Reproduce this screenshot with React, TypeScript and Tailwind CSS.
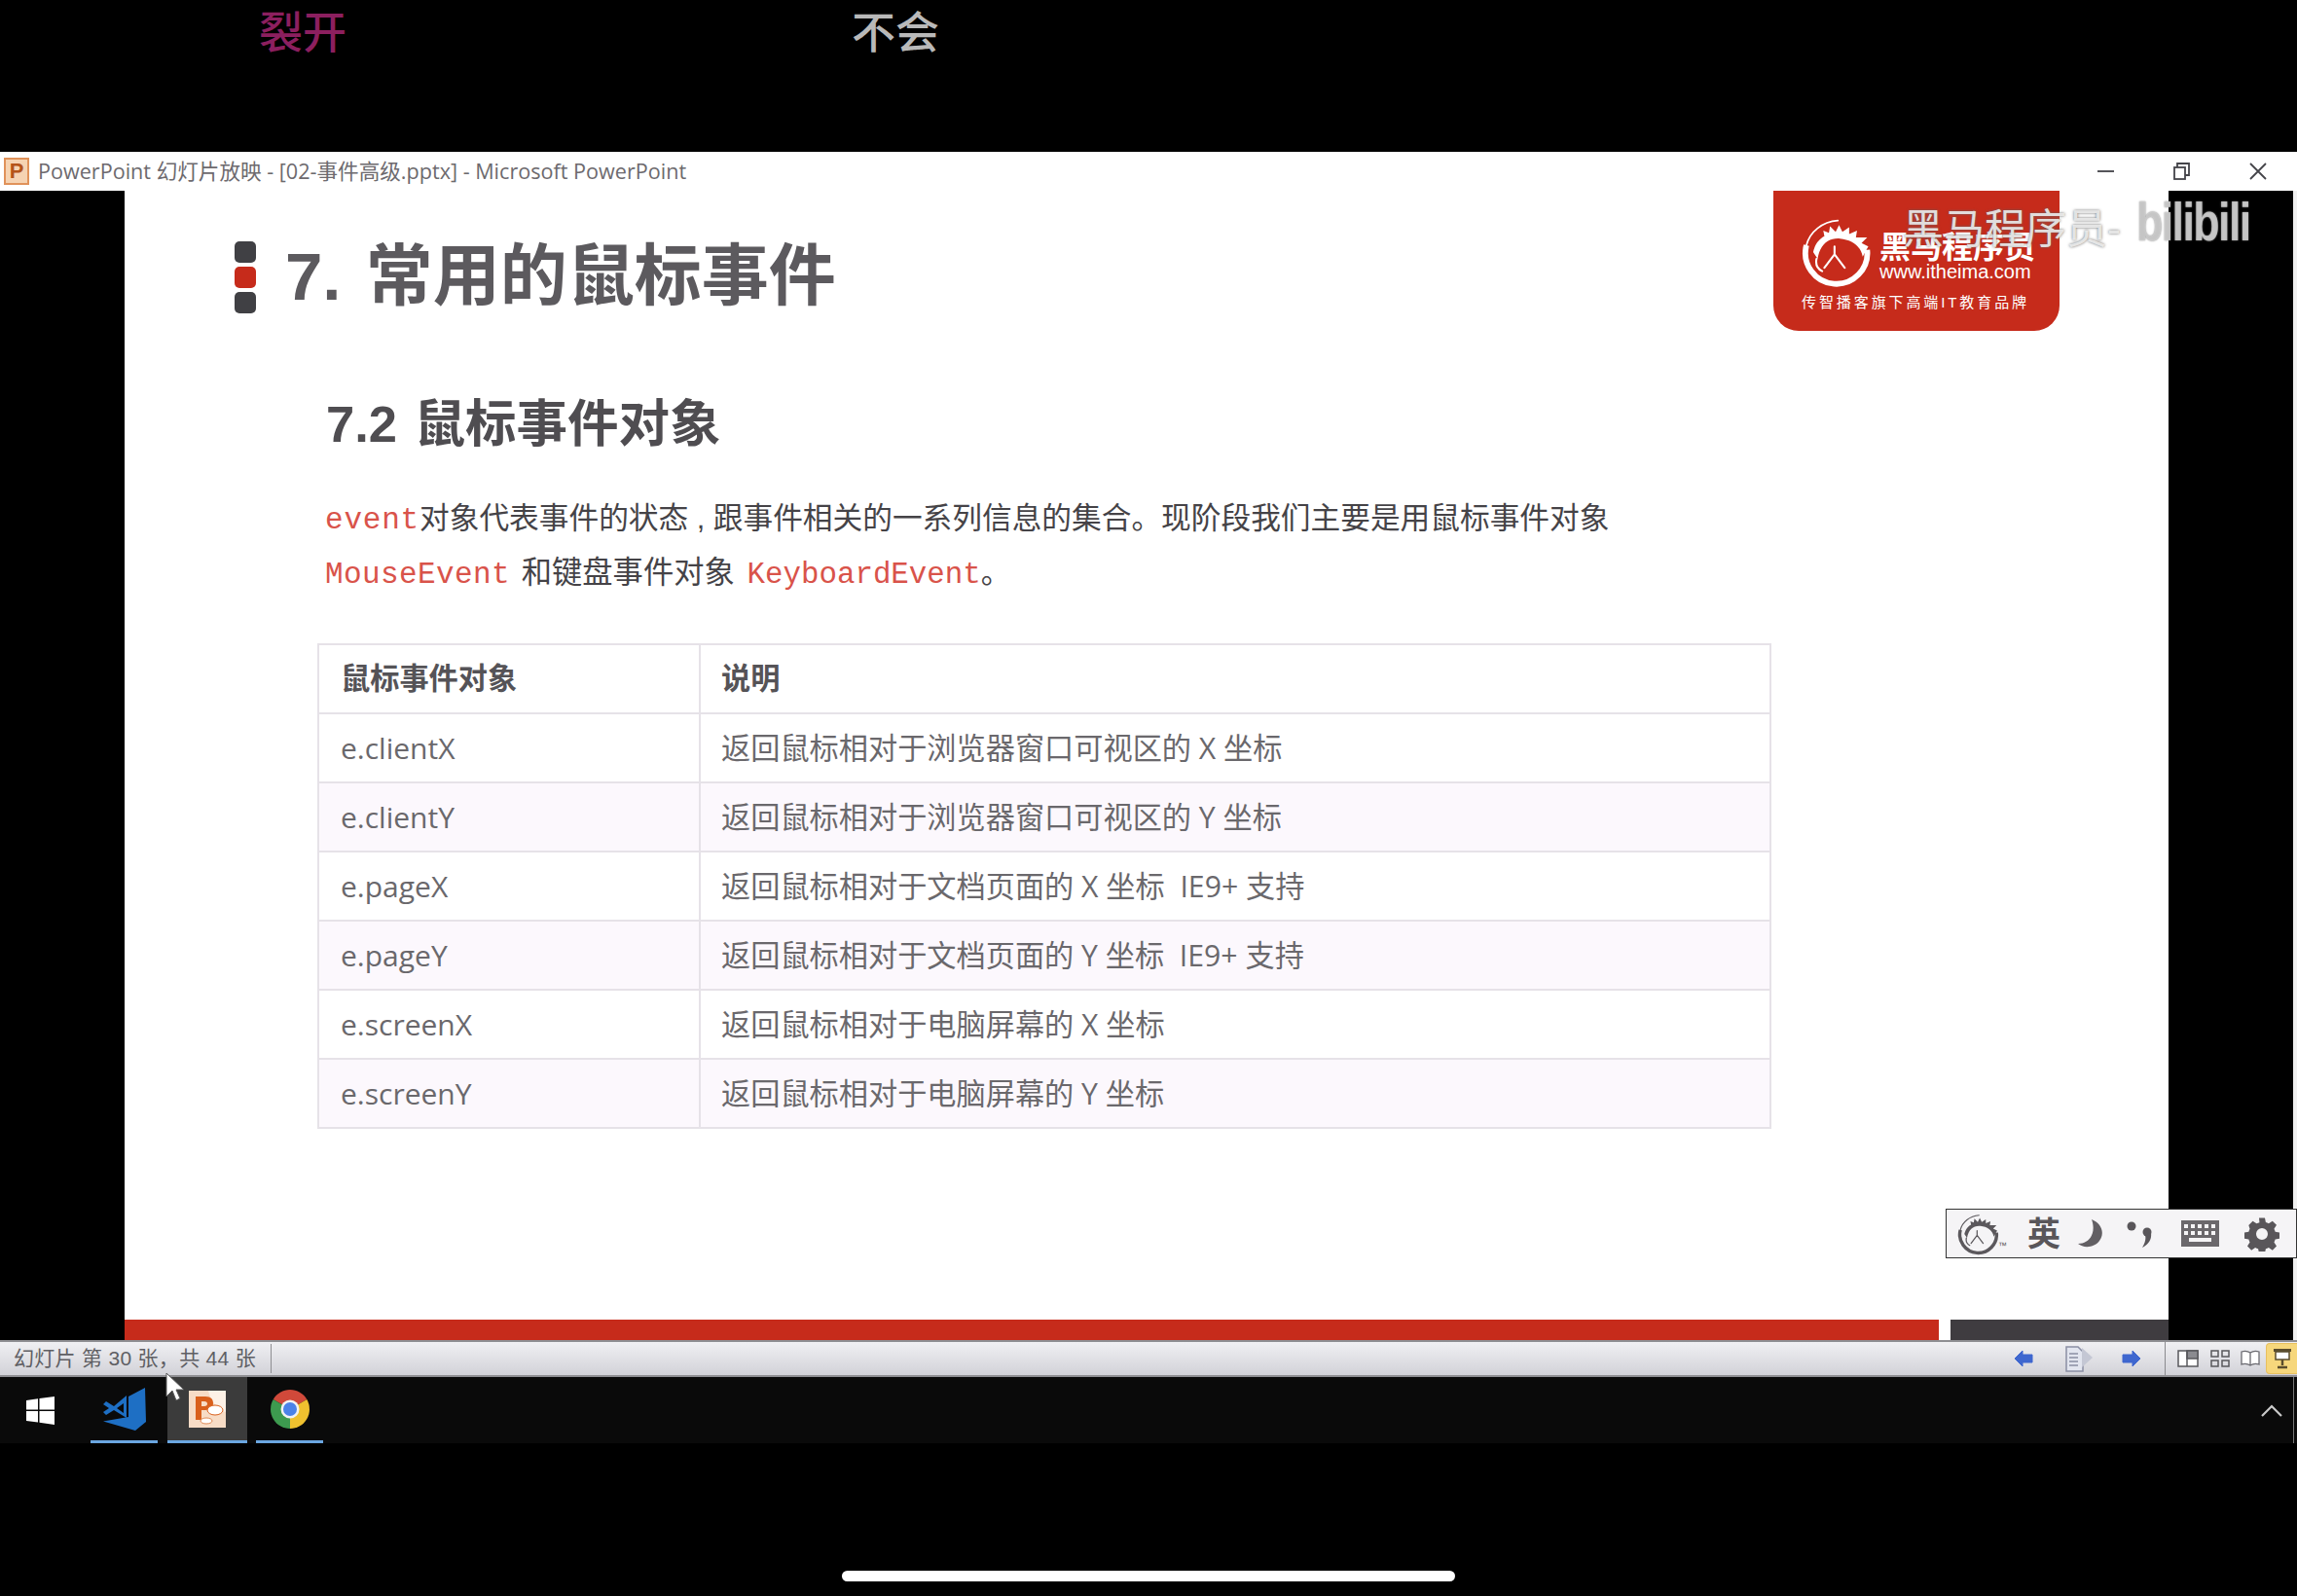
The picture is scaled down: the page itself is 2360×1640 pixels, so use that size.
import React from 'react';

const cjk = '"Liberation Sans", "Noto Sans CJK SC", sans-serif';
const mono = '"Liberation Mono", monospace';

const rows = [
  ['e.clientX', '返回鼠标相对于浏览器窗口可视区的 X 坐标'],
  ['e.clientY', '返回鼠标相对于浏览器窗口可视区的 Y 坐标'],
  ['e.pageX', '返回鼠标相对于文档页面的 X 坐标  IE9+ 支持'],
  ['e.pageY', '返回鼠标相对于文档页面的 Y 坐标  IE9+ 支持'],
  ['e.screenX', '返回鼠标相对于电脑屏幕的 X 坐标'],
  ['e.screenY', '返回鼠标相对于电脑屏幕的 Y 坐标'],
];

function HorseMark({ size, color }: { size: number; color: string }) {
  return (
    <svg width={size} height={size} viewBox="0 0 64 64" fill="none">
      <path d="M60 30A27.500 27.500 0 1 1 6 26" stroke={color} strokeWidth="5" />
      <path d="M6 26C9 14 20 5 34 4" stroke={color} strokeWidth="1.500" strokeLinecap="round" />
      <path d="M12 32C14 24 18 20 22 18L21 13 26 15 27 9 32 14 35 8 38 14 44 10 44 16 51 13 50 19 60 19 55 24 61 27 56 36C54 26 46 21 36 20 26 19 18 25 16 38Z" fill={color} />
      <path d="M31 27V34L22 46M31 34 40 46M15 38C14 43 16 47 20 49" stroke={color} strokeWidth="1.800" strokeLinecap="round" />
    </svg>
  );
}

function Logo() {
  return (
    <div className="absolute left-[1694px] top-0 flex h-[144px] w-[294px] flex-col items-center rounded-b-[26px] bg-[#c62b1b] pt-[26px] text-white">
      <div className="flex items-center gap-[8px] self-start pl-[27px]">
        <HorseMark size={74} color="#ffffff" />
        <div className="flex flex-col items-start pt-[15px]">
          <span className="text-[32px] leading-[25px] font-bold">黑马程序员</span>
          <span className="text-[20px] leading-[24px]">www.itheima.com</span>
        </div>
      </div>
      <span className="mt-[5px] ml-[-2px] text-[15px] leading-[20px] tracking-[2.900px]">传智播客旗下高端IT教育品牌</span>
    </div>
  );
}

function ImeBar() {
  return (
    <div className="absolute right-[-132px] top-[1046px] flex h-[51px] w-[361px] items-center border border-[#333333] bg-[#f5f4f6] pl-[10px] text-[#59565a]">
      <HorseMark size={44} color="#5b585c" />
      <span className="ml-[-1px] mt-[26px] text-[9px] leading-none">™</span>
      <span className="ml-[21px] text-[34px] leading-none font-bold">英</span>
      <svg className="ml-[18px]" width="27" height="29" viewBox="0 0 27 29"><path d="M14 0C24 4 28 14 22 22 17 29 6 30 0 25 12 25 19 14 14 0Z" fill="#625f63" /></svg>
      <svg className="ml-[23px]" width="28" height="30" viewBox="0 0 28 30" fill="#59565a"><circle cx="5" cy="7" r="4.500" /><circle cx="21" cy="13" r="4.500" /><path d="M25 14C26 21 22 26 16 29 19 24 20 20 19 16Z" /></svg>
      <svg className="ml-[28px]" width="39" height="27" viewBox="0 0 39 27"><rect width="39" height="27" fill="#6b686c" /><g fill="#f5f4f6"><rect x="3" y="4" width="4" height="4" /><rect x="10" y="4" width="4" height="4" /><rect x="17" y="4" width="4" height="4" /><rect x="24" y="4" width="4" height="4" /><rect x="31" y="4" width="4" height="4" /><rect x="3" y="11" width="4" height="4" /><rect x="10" y="11" width="4" height="4" /><rect x="17" y="11" width="4" height="4" /><rect x="24" y="11" width="4" height="4" /><rect x="31" y="11" width="4" height="4" /><rect x="8" y="18" width="23" height="4" /></g></svg>
      <svg className="ml-[26px]" width="36" height="36" viewBox="0 0 24 24" fill="#59565a"><path fillRule="evenodd" d="M10 1h4l.6 3a8 8 0 0 1 2 .8l2.600-1.700 2.800 2.800-1.700 2.600a8 8 0 0 1 .8 2l3 .6v4l-3 .6a8 8 0 0 1-.8 2l1.700 2.600-2.800 2.800-2.600-1.700a8 8 0 0 1-2 .8l-.6 3h-4l-.6-3a8 8 0 0 1-2-.8l-2.600 1.700-2.800-2.800 1.700-2.600a8 8 0 0 1-.8-2l-3-.6v-4l3-.6a8 8 0 0 1 .8-2L2.900 6l2.800-2.800 2.600 1.700a8 8 0 0 1 2-.8ZM12 8a4 4 0 1 0 0 8 4 4 0 0 0 0-8Z" /></svg>
    </div>
  );
}

function StatusRight() {
  return (
    <div className="flex h-full items-center">
      <svg width="20" height="18" viewBox="0 0 20 18"><path d="M9 1 1 9l8 8v-4h10V5H9Z" fill="#3f67cf" stroke="#3f67cf" strokeLinejoin="round" /></svg>
      <svg className="ml-[32px]" width="30" height="27" viewBox="0 0 30 27" fill="none"><path d="M2 1h12l5 5v20H2Z" fill="#e2e5ef" stroke="#8a8fa4" strokeWidth="1.500" /><path d="M5 8h9M5 12h9M5 16h9M5 20h9" stroke="#8a8fa4" strokeWidth="1.500" /><path d="M18 2l11 10-11 10Z" fill="#c4c7d4" /></svg>
      <svg className="ml-[29px]" width="20" height="18" viewBox="0 0 20 18"><path d="M11 1l8 8-8 8v-4H1V5h10Z" fill="#3f67cf" stroke="#3f67cf" strokeLinejoin="round" /></svg>
      <div className="ml-[24px] h-[34px] w-[1px] bg-[#8a8a8e]" />
      <svg className="ml-[12px]" width="22" height="18" viewBox="0 0 22 18" fill="none" stroke="#58585c" strokeWidth="1.500"><rect x="1" y="1" width="20" height="16" fill="#fff" /><rect x="10" y="1" width="11" height="8" fill="#8b8b90" /><path d="M10 1v16" /></svg>
      <svg className="ml-[12px]" width="20" height="18" viewBox="0 0 20 18" fill="none" stroke="#58585c" strokeWidth="1.500"><rect x="1" y="1" width="7" height="6" /><rect x="12" y="1" width="7" height="6" /><rect x="1" y="11" width="7" height="6" /><rect x="12" y="11" width="7" height="6" /></svg>
      <svg className="ml-[11px]" width="20" height="18" viewBox="0 0 20 18" fill="#fff" stroke="#6a6a70" strokeWidth="1.300"><path d="M10 3C7 1 4 1 1 2v13c3-1 6-1 9 1 3-2 6-2 9-1V2c-3-1-6-1-9 1Zm0 0v13" /></svg>
      <div className="ml-[6px] flex h-[32px] w-[32px] items-center justify-center rounded-l-[4px] border border-r-0 border-[#e8c060] bg-[#f6d77c]">
        <svg width="20" height="22" viewBox="0 0 20 22" fill="none"><rect x="1" y="1" width="18" height="3" fill="#5a4c2c" /><rect x="3" y="4" width="14" height="8" fill="#fff" stroke="#5a4c2c" strokeWidth="1.500" /><path d="M10 12v6M5 20h10" stroke="#5a4c2c" strokeWidth="2.500" /></svg>
      </div>
    </div>
  );
}

function Taskbar() {
  return (
    <div className="relative flex h-[68px] items-stretch bg-[#0a0a0a]">
      <div className="flex w-[93px] items-center pl-[27px]">
        <svg width="29" height="29" viewBox="0 0 29 29" fill="#ffffff"><path d="M0 4l12-1.800V13.500H0ZM13.500 2 29 0v13.500H13.500ZM0 15h12v11.500L0 25ZM13.500 15H29v14l-15.500-2.200Z" /></svg>
      </div>
      <div className="flex w-[69px] items-center justify-center border-b-[3px] border-[#6aa6e0]">
        <svg width="44" height="44" viewBox="0 0 44 44" fill="#1e6fc4"><path d="M26 9 43 0 44 35 33 44 0 34.500 26 30Z" /><path fillRule="evenodd" d="M3 14 11 19 24 8V31L11 23 3 28 0 25 6 21 0 17ZM14 21 21 26V16Z" /></svg>
      </div>
      <div className="ml-[10px] flex w-[82px] items-center justify-center border-b-[3px] border-[#6aa6e0] bg-[#3b3b3b]">
        <svg width="38" height="38" viewBox="0 0 38 38"><rect width="38" height="38" fill="#f7dcc6" /><path d="M20 0h18v22C30 20 22 10 20 0Z" fill="#fdf1e6" /><path d="M7 6h10c6 0 8 3 8 7s-3 7-8 7h-4v10H7Zm6 5v5h3c2 0 3-1 3-2.500S18 11 16 11Z" fill="#d9601c" /><ellipse cx="27" cy="20" rx="8" ry="5" fill="#fff" stroke="#d9601c" /><ellipse cx="18" cy="31" rx="6" ry="3" fill="#fff" stroke="#e08a55" /></svg>
      </div>
      <div className="ml-[9px] flex w-[69px] items-center justify-center border-b-[3px] border-[#6aa6e0]">
        <svg width="40" height="40" viewBox="0 0 40 40">
          <path d="M20 20 37.300 10A20 20 0 0 0 2.700 10Z" fill="#d0493a" />
          <path d="M20 20 2.700 10A20 20 0 0 0 20 40Z" fill="#3d9a4f" />
          <path d="M20 20 20 40A20 20 0 0 0 37.300 10Z" fill="#efc12f" />
          <circle cx="20" cy="20" r="9.500" fill="#f2f2f2" />
          <circle cx="20" cy="20" r="7" fill="#4b82e8" />
        </svg>
      </div>
      <svg className="absolute right-[15px] top-[28px]" width="22" height="13" viewBox="0 0 22 13" fill="none"><path d="M1 12 11 2l10 10" stroke="#c9c9c9" strokeWidth="2.200" /></svg>
      <div className="absolute bottom-0 right-[3px] top-0 w-[1px] bg-[#777777]" />
    </div>
  );
}

export default function App() {
  return (
    <div className="relative flex h-[1640px] w-[2360px] flex-col overflow-hidden bg-black" style={{ fontFamily: cjk }}>
      {/* captions */}
      <div className="flex h-[156px] items-start pt-[10px] text-[45px] leading-[50px] font-medium">
        <span className="ml-[266px] text-[#8c1f5f]">裂开</span>
        <span className="ml-[519px] text-[#b9b9b9]">不会</span>
      </div>

      {/* title bar */}
      <div className="flex h-[40px] items-center bg-white text-[#6d6a6e]">
        <div className="ml-[4px] flex h-[28px] w-[26px] items-center justify-center border-2 border-[#e0925a] bg-[#f6d3b2] text-[22px] leading-none font-bold text-[#b5541a]">P</div>
        <span className="ml-[9px] text-[21.600px] whitespace-pre" style={{ fontFamily: '"Open Sans", "Noto Sans CJK SC", sans-serif' }}>PowerPoint 幻灯片放映 - [02-事件高级.pptx] - Microsoft PowerPoint</span>
        <div className="ml-auto flex items-center">
          <div className="h-[2px] w-[17px] bg-[#55555a]" />
          <svg className="ml-[61px]" width="17" height="18" viewBox="0 0 17 18" fill="none" stroke="#44444a" strokeWidth="1.800"><rect x="1" y="5" width="11" height="12" /><path d="M4 5V1h12v12h-4" /></svg>
          <svg className="ml-[61px] mr-[31px]" width="18" height="18" viewBox="0 0 18 18" fill="none" stroke="#44444a" strokeWidth="1.800"><path d="M1 1l16 16M17 1 1 17" /></svg>
        </div>
      </div>

      {/* slide area */}
      <div className="flex h-[1181px] pl-[128px]">
        <div className="relative flex w-[2100px] flex-col bg-white">
          <div className="flex h-[171px] items-center pl-[113px] pt-[6px]">
            <div className="flex flex-col gap-[4px]">
              <div className="h-[22px] w-[22px] rounded-[5px] bg-[#404044]" />
              <div className="h-[22px] w-[22px] rounded-[5px] bg-[#c62b1b]" />
              <div className="h-[22px] w-[22px] rounded-[5px] bg-[#404044]" />
            </div>
            <h1 className="ml-[30px] text-[69px] leading-none font-bold [word-spacing:6px] text-[#5c5a5e]">7. 常用的鼠标事件</h1>
          </div>

          <h2 className="ml-[207px] mt-[39px] text-[52.500px] leading-[60px] font-bold [word-spacing:3px] text-[#4f4d51]">7.2 鼠标事件对象</h2>

          <div className="ml-[206px] mt-[39px] text-[30.700px] whitespace-pre text-[#454347]">
            <p className="h-[56px] leading-[56px]"><code className="text-[31px] leading-none tracking-[0.800px] text-[#d9534a]" style={{ fontFamily: mono }}>event</code>对象代表事件的状态 , 跟事件相关的一系列信息的集合。现阶段我们主要是用鼠标事件对象</p>
            <p className="h-[56px] leading-[56px]"><code className="text-[31px] leading-none tracking-[0.400px] text-[#d9534a]" style={{ fontFamily: mono }}>MouseEvent</code><span className="ml-[3px] text-[31.300px]"> 和键盘事件对象 </span><code className="ml-[4px] text-[30.800px] leading-none text-[#d9534a]" style={{ fontFamily: mono }}>KeyboardEvent</code>。</p>
          </div>

          <table className="ml-[198px] mt-[44px] w-[1494px] table-fixed border-collapse text-[30.200px] text-[#6a686c]">
            <colgroup>
              <col className="w-[392px]" />
              <col />
            </colgroup>
            <thead>
              <tr className="h-[71px]">
                <th className="border-2 border-[#e6e2e8] pl-[22px] text-left font-bold text-[#555357]">鼠标事件对象</th>
                <th className="border-2 border-[#e6e2e8] pl-[21px] text-left font-bold text-[#555357]">说明</th>
              </tr>
            </thead>
            <tbody>
              {rows.map((row, i) => (
                <tr key={row[0]} className={i % 2 === 1 ? 'h-[71px] bg-[#fcf8fd]' : 'h-[71px] bg-white'}>
                  <td className="border-2 border-[#e6e2e8] pl-[22px] text-[30px]" style={{ fontFamily: '"Open Sans", sans-serif' }}>{row[0]}</td>
                  <td className="border-2 border-[#e6e2e8] pl-[21px] whitespace-pre" style={{ fontFamily: '"Open Sans", "Noto Sans CJK SC", sans-serif' }}>{row[1]}</td>
                </tr>
              ))}
            </tbody>
          </table>

          {/* footer band */}
          <div className="mt-auto flex h-[21px]">
            <div className="w-[1864px] bg-[#c62b1b]" />
            <div className="ml-[12px] flex-1 bg-[#3f3c40]" />
          </div>

          <Logo />
          <ImeBar />

          {/* bilibili watermark */}
          <div className="absolute left-[1827px] top-[18px] text-[42px] leading-[44px] text-[#f0f0f0]/90 [text-shadow:0_0_3px_#666]">黑马程序员-</div>
          <div className="absolute left-[2067px] top-[2px] origin-left scale-x-[0.8] text-[56px] leading-[60px] font-bold tracking-[-2px] text-[#d4d4d4]/80 [text-shadow:0_0_2px_#888]">bilibili</div>
        </div>
        <div className="ml-auto w-[4px] bg-[#f0f0f0]" />
      </div>

      {/* status bar */}
      <div className="flex h-[38px] items-center justify-between border-y-2 border-[#8e8e92] bg-gradient-to-b from-[#f0f0f3] to-[#d2d2d8]">
        <div className="flex h-full items-center">
          <span className="ml-[14px] text-[21px] tracking-[0.300px] whitespace-pre text-[#5f5f64]">幻灯片 第 30 张，共 44 张</span>
          <div className="ml-[15px] h-[30px] w-[1px] bg-[#8e8e92]" />
        </div>
        <StatusRight />
      </div>

      <Taskbar />

      {/* home indicator */}
      <div className="flex flex-1 items-end justify-center pb-[15px]">
        <div className="h-[11px] w-[630px] rounded-full bg-white" />
      </div>

      {/* pointer */}
      <svg className="absolute left-[170px] top-[1410px]" width="20" height="30" viewBox="0 0 20 30"><path d="M1 1v24l6-6 4 10 4-2-4-9h8Z" fill="#fff" stroke="#555" strokeWidth="1" /></svg>
    </div>
  );
}
